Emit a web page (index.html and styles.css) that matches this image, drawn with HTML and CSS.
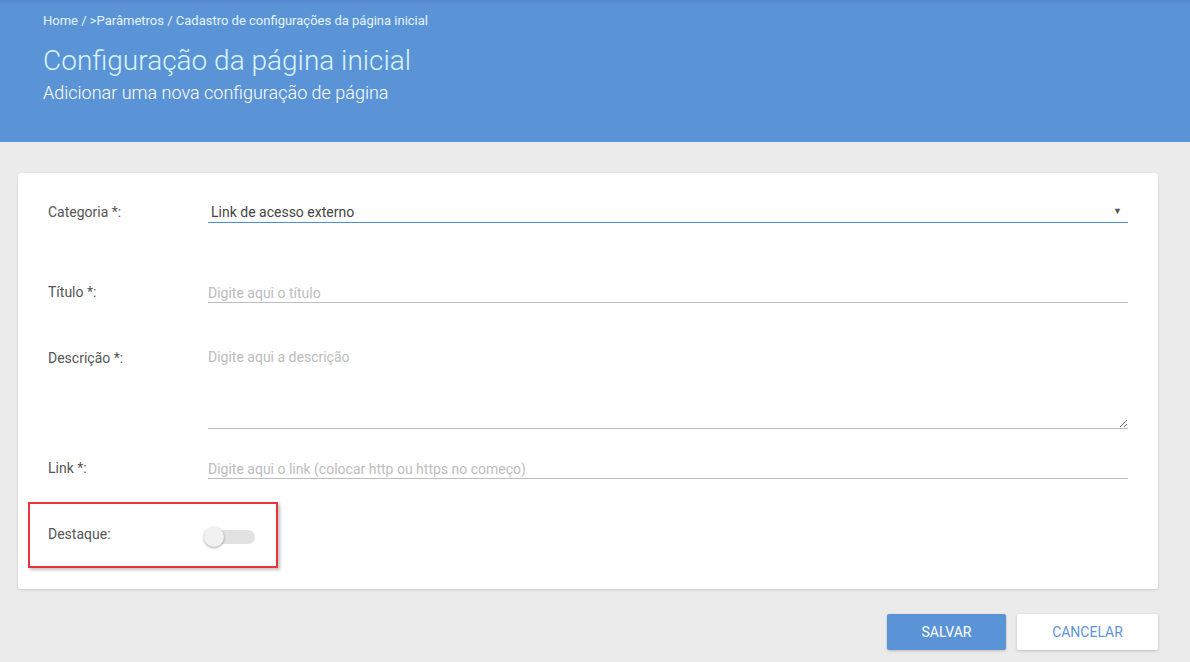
FILE: index.html
```html
<!DOCTYPE html>
<html lang="pt">
<head>
<meta charset="utf-8">
<title>Configuração da página inicial</title>
<link rel="stylesheet" href="styles.css">
</head>
<body>
<header class="hero">
  <div class="crumbs">Home / &gt;Parâmetros / Cadastro de configurações da página inicial</div>
  <h1 class="title">Configuração da página inicial</h1>
  <p class="subtitle">Adicionar uma nova configuração de página</p>
</header>
<main class="content">
  <section class="card">
    <div class="row row-cat">
      <label class="lbl">Categoria *:</label>
      <div class="field select-wrap">
        <select class="select">
          <option>Link de acesso externo</option>
        </select>
        <span class="arrow">▼</span>
      </div>
    </div>
    <div class="row row-title">
      <label class="lbl">Título *:</label>
      <input class="field input" type="text" placeholder="Digite aqui o título">
    </div>
    <div class="row row-desc">
      <label class="lbl">Descrição *:</label>
      <textarea class="field textarea" placeholder="Digite aqui a descrição"></textarea>
    </div>
    <div class="row row-link">
      <label class="lbl">Link *:</label>
      <input class="field input" type="text" placeholder="Digite aqui o link (colocar http ou https no começo)">
    </div>
    <div class="highlight">
      <label class="lbl">Destaque:</label>
      <span class="toggle"><span class="knob"></span></span>
    </div>
  </section>
  <div class="actions">
    <button class="btn btn-primary">SALVAR</button>
    <button class="btn btn-secondary">CANCELAR</button>
  </div>
</main>
</body>
</html>
```
FILE: styles.css
```css
html, body {
  margin: 0;
  padding: 0;
}
body {
  background: #ebebeb;
  font-family: Roboto, "Liberation Sans", Arial, sans-serif;
  width: 1190px;
  height: 662px;
  overflow: hidden;
}
.hero {
  background: linear-gradient(#5489cc 0, #5b94d6 6px, #5b94d6 100%);
  height: 142px;
  box-sizing: border-box;
  padding: 13px 0 0 43px;
}
.crumbs {
  font-size: 13px;
  color: #e2f4ff;
  line-height: 16px;
}
.title {
  margin: 15px 0 0 0;
  font-weight: 300;
  font-size: 28px;
  line-height: 34px;
  color: #d9f3ff;
}
.subtitle {
  margin: 3px 0 0 0;
  font-weight: 300;
  font-size: 18px;
  line-height: 24px;
  color: #ffffff;
}
.content {
  padding: 31px 32px 0 18px;
}
.card {
  background: #fff;
  border-radius: 3px;
  box-shadow: 0 1px 3px rgba(0,0,0,0.15);
  padding: 30px 30px 21px 30px;
  height: 416px;
  box-sizing: border-box;
}
.row {
  display: flex;
  align-items: flex-start;
}
.lbl {
  width: 160px;
  flex: none;
  font-size: 14px;
  color: #555;
  line-height: 18px;
}
.field {
  flex: 1;
  box-sizing: border-box;
  border: none;
  border-bottom: 1px solid #bdbdbd;
  font-family: inherit;
  font-size: 14px;
  color: #444;
  outline: none;
  background: transparent;
  padding: 0;
  margin: 0;
}
.input::placeholder, .textarea::placeholder {
  color: #bdbdbd;
}
.row-cat { height: 20px; }
.select-wrap {
  position: relative;
  height: 20px;
  border-bottom: 1px solid #4a8fdc;
}
.select {
  appearance: none;
  -webkit-appearance: none;
  border: none;
  outline: none;
  background: transparent;
  font-family: inherit;
  font-size: 14px;
  color: #444;
  width: 100%;
  height: 18px;
  padding: 0 0 0 3px;
  margin: 0;
}
.arrow {
  position: absolute;
  right: 6px;
  top: 3px;
  font-size: 9px;
  color: #555;
  pointer-events: none;
}
.row-title { margin-top: 60px; }
.input {
  height: 20px;
  line-height: 18px;
}
.row-desc { margin-top: 42px; }
.row-desc .lbl { margin-top: 4px; }
.textarea {
  height: 84px;
  resize: vertical;
  padding-top: 3px;
  line-height: 18px;
}
.row-link { margin-top: 30px; }
.highlight {
  display: flex;
  align-items: center;
  width: 250px;
  height: 66px;
  box-sizing: border-box;
  margin: 23px 0 0 -20px;
  padding-left: 18px;
  border: 2px solid #e8343a;
  box-shadow: 2px 2px 3px rgba(0,0,0,0.25);
}
.highlight .lbl {
  width: 161px;
  margin-top: -2px;
}
.toggle {
  position: relative;
  display: inline-block;
  width: 46px;
  height: 14px;
  border-radius: 7px;
  background: #e2e2e2;
  margin-top: 4px;
}
.knob {
  position: absolute;
  left: -5px;
  top: -3px;
  width: 20px;
  height: 20px;
  border-radius: 50%;
  background: #f1f1f1;
  box-shadow: 0 1px 3px rgba(0,0,0,0.35);
}
.actions {
  display: flex;
  justify-content: flex-end;
  gap: 11px;
  margin-top: 25px;
}
.btn {
  height: 36px;
  border: none;
  border-radius: 2px;
  font-family: inherit;
  font-size: 14px;
  box-shadow: 0 1px 3px rgba(0,0,0,0.2);
  cursor: pointer;
}
.btn-primary {
  width: 119px;
  background: #5b94d6;
  color: #fff;
}
.btn-secondary {
  width: 141px;
  background: #fff;
  color: #5e93d8;
}
```
